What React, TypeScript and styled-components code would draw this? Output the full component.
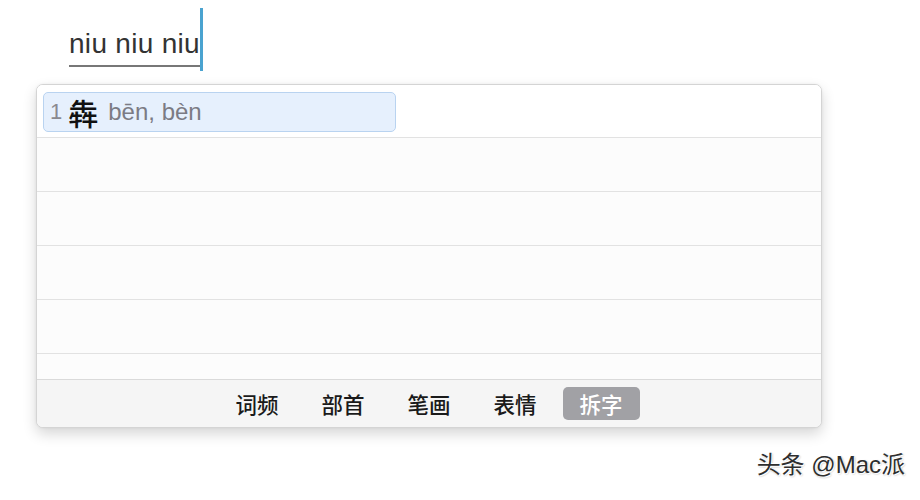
import React from 'react'
import styled, { createGlobalStyle } from 'styled-components'

const GlobalStyle = createGlobalStyle`
  html, body {
    margin: 0;
    padding: 0;
    background: #ffffff;
  }
  body {
    width: 920px;
    height: 500px;
    overflow: hidden;
    font-family: 'Liberation Sans', 'Noto Sans CJK SC', sans-serif;
  }
`

const Page = styled.div`
  position: relative;
  width: 920px;
  height: 500px;
  padding: 8px 0 0 36px;
  box-sizing: border-box;
`

const InputRow = styled.div`
  display: flex;
  align-items: flex-start;
  height: 76px;
  padding-left: 33px;
`

const Composed = styled.div`
  margin-top: 20px;
  font-size: 28px;
  line-height: 32px;
  color: #333;
  letter-spacing: 0.3px;
  border-bottom: 2px solid #777;
  padding-bottom: 5px;
`

const Caret = styled.div`
  width: 3px;
  height: 63px;
  background: #4aa3d0;
`

const Panel = styled.div`
  width: 786px;
  height: 344px;
  border: 1px solid #d4d4d4;
  border-radius: 7px;
  background: #fff;
  box-shadow: 0 6px 14px rgba(0, 0, 0, 0.16), 0 0 3px rgba(0, 0, 0, 0.06);
  display: flex;
  flex-direction: column;
  overflow: hidden;
  box-sizing: border-box;
`

const List = styled.div`
  flex: 1;
  overflow: hidden;
  background: #fdfdfd;
`

const Row = styled.div<{ first?: boolean }>`
  height: ${({ first }) => (first ? 52 : 53)}px;
  border-bottom: 1px solid #e2e2e2;
  display: flex;
  align-items: center;
  padding-left: 6px;
  background: ${({ first }) => (first ? '#fff' : '#fcfcfc')};
`

const Candidate = styled.div`
  width: 353px;
  height: 40px;
  box-sizing: border-box;
  margin-top: 2px;
  border: 1px solid #b9d3f0;
  border-radius: 5px;
  background: #e6f0fd;
  display: flex;
  align-items: center;
  padding-left: 6px;
`

const Index = styled.span`
  font-size: 22px;
  color: #8a8a90;
  margin-right: 6px;
`

const Hanzi = styled.span`
  font-family: 'Noto Sans CJK SC', sans-serif;
  font-size: 30px;
  font-weight: 500;
  color: #111;
  margin-right: 10px;
`

const Pinyin = styled.span`
  font-size: 24px;
  color: #7b7b84;
`

const Footer = styled.div`
  height: 47px;
  border-top: 1px solid #dadada;
  background: #f5f5f5;
  display: flex;
  justify-content: center;
  align-items: center;
  gap: 9px;
`

const Tab = styled.div<{ active?: boolean }>`
  width: 77px;
  height: 33px;
  border-radius: 5px;
  display: flex;
  align-items: center;
  justify-content: center;
  font-family: 'Noto Sans CJK SC', sans-serif;
  font-size: 21.5px;
  font-weight: 500;
  color: ${({ active }) => (active ? '#fff' : '#1a1a1a')};
  background: ${({ active }) => (active ? '#a1a1a5' : 'transparent')};
`

const Watermark = styled.div`
  position: absolute;
  right: 15px;
  bottom: 20px;
  font-family: 'Liberation Sans', 'Noto Sans CJK SC', sans-serif;
  font-size: 24px;
  color: #2e2e2e;
  text-shadow: 1px 1px 0 #fff, -1px -1px 0 #fff, 1px 1px 2px rgba(0, 0, 0, 0.35);
`

const tabs = ['词频', '部首', '笔画', '表情', '拆字']

const App = () => {
  return (
    <Page>
      <GlobalStyle />
      <InputRow>
        <Composed>niu niu niu</Composed>
        <Caret />
      </InputRow>
      <Panel>
        <List>
          <Row first>
            <Candidate>
              <Index>1</Index>
              <Hanzi>犇</Hanzi>
              <Pinyin>bēn, bèn</Pinyin>
            </Candidate>
          </Row>
          <Row />
          <Row />
          <Row />
          <Row />
          <Row />
        </List>
        <Footer>
          {tabs.map((t) => (
            <Tab key={t} active={t === '拆字'}>
              {t}
            </Tab>
          ))}
        </Footer>
      </Panel>
      <Watermark>头条 @Mac派</Watermark>
    </Page>
  )
}

export default App
